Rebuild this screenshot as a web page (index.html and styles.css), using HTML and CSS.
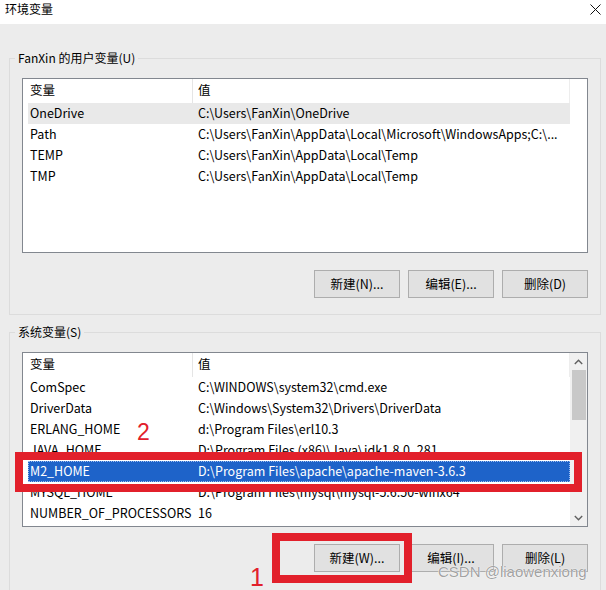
FILE: index.html
```html
<!DOCTYPE html>
<html lang="zh-CN">
<head>
    <meta charset="UTF-8">
    <title>环境变量</title>
    <link rel="stylesheet" href="styles.css">
</head>
<body>
    <div class="titlebar">
        <span class="title">环境变量</span>
        <svg class="close" width="11" height="11" viewBox="0 0 11 11">
            <path d="M0.5 0.5 L10.5 10.5 M10.5 0.5 L0.5 10.5" stroke="#111" stroke-width="1" fill="none"/>
        </svg>
    </div>

    <div class="dialog">
        <fieldset class="group">
            <legend>FanXin 的用户变量(U)</legend>
            <div class="list">
                <div class="list-body">
                    <div class="row head"><span>变量</span><span>值</span></div>
                    <div class="row hover"><span>OneDrive</span><span>C:\Users\FanXin\OneDrive</span></div>
                    <div class="row"><span>Path</span><span>C:\Users\FanXin\AppData\Local\Microsoft\WindowsApps;C:\...</span></div>
                    <div class="row"><span>TEMP</span><span>C:\Users\FanXin\AppData\Local\Temp</span></div>
                    <div class="row"><span>TMP</span><span>C:\Users\FanXin\AppData\Local\Temp</span></div>
                </div>
            </div>
            <div class="buttons">
                <button class="btn">新建(N)...</button>
                <button class="btn">编辑(E)...</button>
                <button class="btn">删除(D)</button>
            </div>
        </fieldset>

        <fieldset class="group second">
            <legend>系统变量(S)</legend>
            <div class="list">
                <div class="list-body">
                    <div class="row head"><span>变量</span><span>值</span></div>
                    <div class="row"><span>ComSpec</span><span>C:\WINDOWS\system32\cmd.exe</span></div>
                    <div class="row"><span>DriverData</span><span>C:\Windows\System32\Drivers\DriverData</span></div>
                    <div class="row"><span>ERLANG_HOME</span><span>d:\Program Files\erl10.3</span></div>
                    <div class="row"><span>JAVA_HOME</span><span>D:\Program Files (x86)\Java\jdk1.8.0_281</span></div>
                    <div class="row selected"><span>M2_HOME</span><span>D:\Program Files\apache\apache-maven-3.6.3</span></div>
                    <div class="row"><span>MYSQL_HOME</span><span>D:\Program Files\mysql\mysql-5.6.50-winx64</span></div>
                    <div class="row"><span>NUMBER_OF_PROCESSORS</span><span>16</span></div>
                </div>
                <div class="scrollbar">
                    <div class="arrow">
                        <svg width="9" height="6" viewBox="0 0 9 6"><path d="M0.8 5 L4.5 1.3 L8.2 5" stroke="#606060" stroke-width="1.4" fill="none"/></svg>
                    </div>
                    <div class="thumb"></div>
                    <div class="track"></div>
                    <div class="arrow">
                        <svg width="9" height="6" viewBox="0 0 9 6"><path d="M0.8 1 L4.5 4.7 L8.2 1" stroke="#606060" stroke-width="1.4" fill="none"/></svg>
                    </div>
                </div>
            </div>
            <div class="buttons">
                <button class="btn">新建(W)...</button>
                <button class="btn">编辑(I)...</button>
                <button class="btn">删除(L)</button>
            </div>
        </fieldset>
    </div>

    <!-- annotations drawn on top of the screenshot -->
    <div class="mark mark-row"></div>
    <div class="mark mark-btn"></div>
    <span class="step step-2">2</span>
    <span class="step step-1">1</span>
    <span class="watermark">CSDN @liaowenxiong</span>
</body>
</html>
```

FILE: styles.css
```css
* {
    box-sizing: border-box;
}

body {
    margin: 0;
    background: #ececec;
    font-family: "Noto Sans CJK SC", "Noto Sans", sans-serif;
    font-size: 12px;
    color: #000;
    height: 590px;
    overflow: hidden;
}

.titlebar {
    height: 24px;
    background: #fff;
    display: flex;
    justify-content: space-between;
    align-items: flex-start;
    padding: 0 5px 0 5px;
}

.title {
    line-height: 18px;
}

.close {
    margin-top: 4px;
}

.dialog {
    padding: 26px 5px 0 9px;
}

.group {
    margin: 0;
    border: 1px solid #dcdcdc;
    padding: 12px 12px 16px 12px;
    min-width: 0;
}

.group.second {
    margin-top: 9px;
    padding-bottom: 40px;
}

.group legend {
    margin-left: -7px;
    padding: 0 3px;
    line-height: 16px;
}

.list {
    height: 175px;
    border: 1px solid #82878f;
    background: #fff;
    display: flex;
}

.list-body {
    width: 547px;
    overflow: hidden;
}

.row {
    display: grid;
    grid-template-columns: 165px 377px;
    height: 21px;
    line-height: 19px;
    margin-left: 5px;
    font-size: 12.5px;
    white-space: nowrap;
}

.row span {
    overflow: hidden;
}

.row span:first-child {
    padding-left: 2px;
}

.row span:last-child {
    padding-left: 5px;
}

.row.head {
    height: 24px;
    line-height: 22px;
}

.row.head span:first-child {
    border-right: 1px solid #e5e5e5;
}

.row.head span:last-child {
    border-right: 1px solid #ededed;
}

.row.hover {
    background: #e9e9e9;
}

.row.selected {
    background: #1e63c9;
    color: #fff;
    outline: 1px dotted #9dbdf0;
    outline-offset: -1px;
}

.scrollbar {
    width: 17px;
    background: #f0f0f0;
    display: flex;
    flex-direction: column;
}

.arrow {
    height: 17px;
    display: flex;
    align-items: center;
    justify-content: center;
}

.thumb {
    height: 50px;
    margin: 0 1px 0 2px;
    background: #c8c8c8;
}

.track {
    flex: 1;
}

.buttons {
    display: flex;
    justify-content: flex-end;
    gap: 8px;
    margin-top: 17px;
}

.btn {
    width: 86px;
    height: 28px;
    background: #e1e1e1;
    border: 1px solid #adadad;
    font-family: inherit;
    font-size: 12.5px;
    color: #000;
    padding: 0 0 1px;
}

.mark {
    position: absolute;
    border: 8px solid #e2202b;
}

.mark-row {
    left: 15px;
    top: 452px;
    width: 567px;
    height: 40px;
}

.mark-btn {
    left: 272px;
    top: 533px;
    width: 140px;
    height: 50px;
}

.step {
    position: absolute;
    font-family: "Liberation Sans", sans-serif;
    line-height: 1;
    color: #e2202b;
}

.step-2 {
    left: 137px;
    top: 421px;
    font-size: 23px;
}

.step-1 {
    left: 250px;
    top: 565px;
    font-size: 25px;
}

.watermark {
    position: absolute;
    left: 438px;
    top: 564px;
    font-family: "Liberation Sans", sans-serif;
    font-size: 15px;
    line-height: 1;
    color: rgba(120, 120, 120, 0.7);
    text-shadow: 0 0 1px #fff, 0 0 1px #fff;
}
```
